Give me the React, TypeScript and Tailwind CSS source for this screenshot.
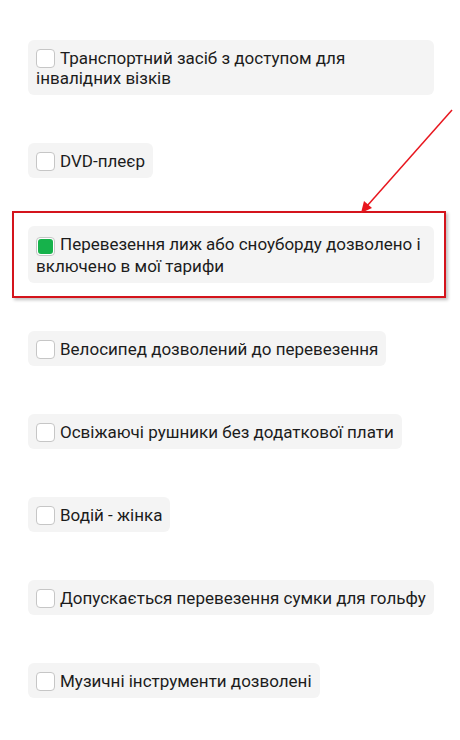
import React from "react";

const items = [
  "Транспортний засіб з доступом для інвалідних візків",
  "DVD-плеєр",
  "Перевезення лиж або сноуборду дозволено і включено в мої тарифи",
  "Велосипед дозволений до перевезення",
  "Освіжаючі рушники без додаткової плати",
  "Водій - жінка",
  "Допускається перевезення сумки для гольфу",
  "Музичні інструменти дозволені",
];

function Box({ checked }: { checked?: boolean }) {
  return (
    <span className="inline-flex align-[-4px] w-[19px] h-[19px] mr-[5px] rounded-[4px] border border-[#c6c6c6] bg-white items-center justify-center">
      {checked && <span className="block w-[15px] h-[15px] rounded-[3px] bg-[#16b24b]" />}
    </span>
  );
}

function Item({ text, checked }: { text: string; checked?: boolean }) {
  return (
    <div className="self-start max-w-[406px] rounded-[6px] bg-[#f4f4f4] pl-[8px] pr-[8px] py-[7.5px] text-[17px] leading-[20px] text-[#1c1c1c]">
      <Box checked={checked} />
      {text}
    </div>
  );
}

export default function App() {
  return (
    <div
      className="relative w-[460px] h-[740px] bg-white overflow-hidden"
      style={{ fontFamily: "Roboto, 'Noto Sans', sans-serif" }}
    >
      <div className="flex flex-col gap-[48px] pl-[28px] pt-[40px]">
        {items.map((t, i) =>
          i === 2 ? (
            <div key={i} className="relative self-start">
              <Item text={t} checked />
              <div className="absolute left-[-16px] top-[-15px] right-[-12px] bottom-[-15px] border-2 border-[#d4141c] shadow-[2px_2px_3px_rgba(0,0,0,0.25)] pointer-events-none" />
            </div>
          ) : (
            <Item key={i} text={t} />
          )
        )}
      </div>
      <svg className="absolute left-0 top-0 pointer-events-none" width="460" height="740">
        <line x1="452" y1="110" x2="367" y2="206" stroke="#e8161e" strokeWidth="1.5" />
        <polygon points="361,213 364,201 372,208" fill="#e8161e" />
      </svg>
    </div>
  );
}
